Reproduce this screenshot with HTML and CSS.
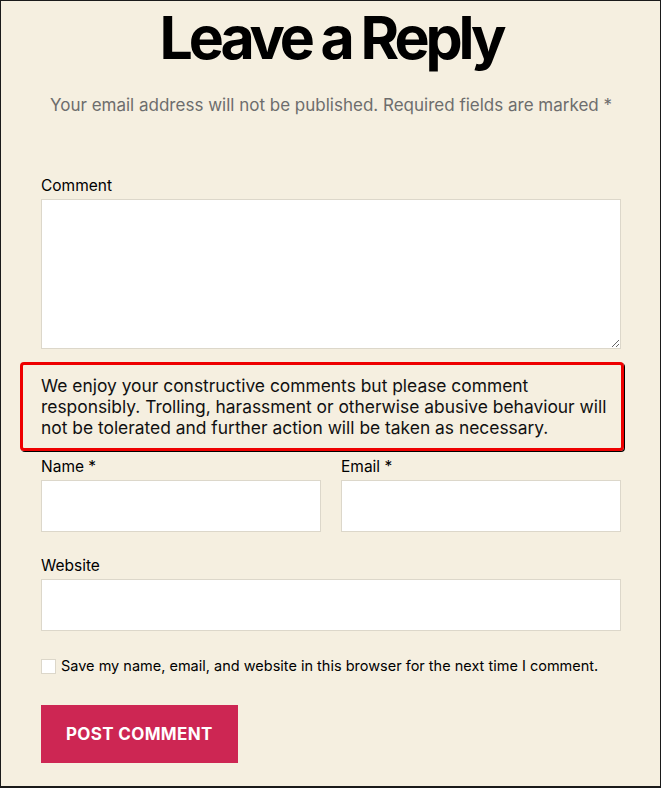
FILE: index.html
```html
<!DOCTYPE html>
<html lang="en">
<head>
    <meta charset="UTF-8">
    <meta name="viewport" content="width=device-width, initial-scale=1.0">
    <title>Leave a Reply</title>
    <link rel="stylesheet" href="styles.css">
</head>
<body>
    <div class="respond">
        <h2 class="reply-title">Leave a Reply</h2>
        <p class="notes">Your email address will not be published. Required fields are marked *</p>

        <form class="comment-form">
            <div class="field">
                <label for="comment">Comment</label>
                <textarea id="comment"></textarea>
            </div>

            <div class="policy">
                We enjoy your constructive comments but please comment responsibly. Trolling, harassment or otherwise abusive behaviour will not be tolerated and further action will be taken as necessary.
            </div>

            <div class="row">
                <div class="field">
                    <label for="author">Name *</label>
                    <input type="text" id="author">
                </div>
                <div class="field">
                    <label for="email">Email *</label>
                    <input type="text" id="email">
                </div>
            </div>

            <div class="field">
                <label for="url">Website</label>
                <input type="text" id="url">
            </div>

            <div class="consent">
                <input type="checkbox" id="cookies">
                <label for="cookies">Save my name, email, and website in this browser for the next time I comment.</label>
            </div>

            <button type="button" class="submit">Post Comment</button>
        </form>
    </div>
</body>
</html>
```

FILE: styles.css
```css
html {
    height: 100%;
}
body {
    font-family: 'Inter', 'Liberation Sans', sans-serif;
    margin: 0;
    height: 100%;
    box-sizing: border-box;
    border: 1px solid #1a1a1a;
    border-bottom-width: 2px;
    background-color: #f5efe0;
    color: #000;
    overflow: hidden;
}
.respond {
    padding: 0 39px 0 40px;
}
.reply-title {
    margin: 5px 0 0;
    text-align: center;
    font-size: 59px;
    font-weight: 700;
    line-height: 64px;
    letter-spacing: -0.07em;
}
.notes {
    margin: 24px 0 0;
    text-align: center;
    font-size: 17px;
    line-height: 22px;
    color: #6d6d6d;
}
.comment-form {
    margin-top: 59px;
}
.field {
    display: flex;
    flex-direction: column;
}
label {
    font-size: 15.5px;
    line-height: 22px;
    margin-bottom: 2px;
}
textarea, input[type="text"] {
    box-sizing: border-box;
    width: 100%;
    margin: 0;
    border: 1px solid #dcd7ca;
    border-radius: 0;
    background-color: #fff;
    font-family: inherit;
}
textarea {
    height: 150px;
    resize: vertical;
}
input[type="text"] {
    height: 52px;
}
.policy {
    margin: 13px -3px 5px -21px;
    padding: 10px 10px 10px 18px;
    border: 3px solid #ee0000;
    border-radius: 4px;
    box-shadow: 1px 1px 0 #000;
    font-size: 17.4px;
    line-height: 21px;
    color: #111;
}
.row {
    display: grid;
    grid-template-columns: 1fr 1fr;
    gap: 20px;
    margin-bottom: 23px;
}
.consent {
    display: flex;
    align-items: center;
    margin-top: 24px;
}
.consent input {
    -webkit-appearance: none;
    appearance: none;
    width: 15px;
    height: 15px;
    margin: 0 5px 0 0;
    border: 1px solid #dcd7ca;
    background-color: #fff;
}
.consent label {
    margin: 0;
    font-size: 14.5px;
}
.submit {
    margin-top: 28px;
    padding: 0 25px;
    height: 58px;
    background-color: #cd2653;
    color: #fff;
    border: none;
    font-family: inherit;
    font-size: 17px;
    font-weight: 700;
    letter-spacing: 0.02em;
    text-transform: uppercase;
    cursor: pointer;
}
```
